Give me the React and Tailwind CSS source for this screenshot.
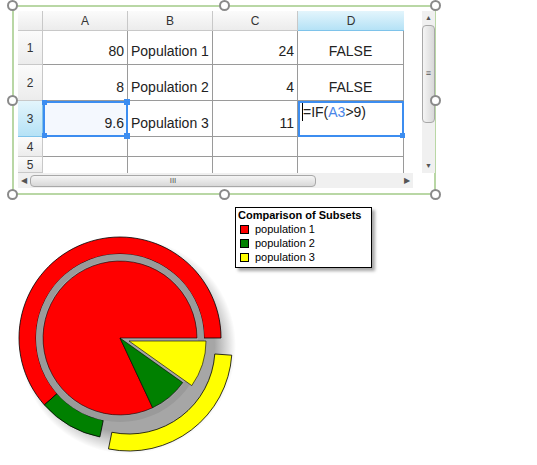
import React from 'react'

const cx = 120
const cy = 343

function pt(r, a, dx = 0, dy = 0) {
  const t = (a * Math.PI) / 180
  return [cx + dx + r * Math.cos(t), cy + dy + r * Math.sin(t)]
}

function wedge(r, a0, a1, dx = 0, dy = 0) {
  const [x0, y0] = pt(r, a0, dx, dy)
  const [x1, y1] = pt(r, a1, dx, dy)
  const big = a1 - a0 > 180 ? 1 : 0
  return `M${cx + dx},${cy + dy} L${x0},${y0} A${r},${r} 0 ${big} 1 ${x1},${y1} Z`
}

function band(r0, r1, a0, a1, dx = 0, dy = 0) {
  const [x0, y0] = pt(r1, a0, dx, dy)
  const [x1, y1] = pt(r1, a1, dx, dy)
  const [x2, y2] = pt(r0, a1, dx, dy)
  const [x3, y3] = pt(r0, a0, dx, dy)
  const big = a1 - a0 > 180 ? 1 : 0
  return `M${x0},${y0} A${r1},${r1} 0 ${big} 1 ${x1},${y1} L${x2},${y2} A${r0},${r0} 0 ${big} 0 ${x3},${y3} Z`
}

function Handle({ className }) {
  return <div className={`absolute w-[11px] h-[11px] rounded-full border-2 border-[#8a8a8a] bg-white ${className}`} />
}

const colHead = 'flex items-center justify-center border-r border-b border-[#c8c8c8] bg-gradient-to-b from-[#fbfbfb] to-[#ececec] text-[12px] text-[#333]'
const rowHead = 'flex items-center justify-center border-r border-b border-[#c8c8c8] bg-gradient-to-b from-[#fbfbfb] to-[#ececec] text-[12px] text-[#333]'
const cell = 'flex items-end px-[3px] pb-[2px] border-r border-b border-[#9a9a9a] text-[14px] text-[#222] whitespace-nowrap overflow-hidden'

function Sheet() {
  return (
    <div className="flex pl-1 pt-1 h-full" style={{ fontFamily: '"Liberation Sans", Arial, sans-serif' }}>
      <div className="flex flex-col">
        <div className="grid grid-cols-[25px_85px_85px_85px_106px] grid-rows-[20px_34px_36px_36px_20px_16px]">
          <div className={colHead} />
          <div className={colHead}>A</div>
          <div className={colHead}>B</div>
          <div className={colHead}>C</div>
          <div className="flex items-center justify-center border-b border-[#7ec3ea] bg-gradient-to-b from-[#e3f5fc] to-[#b5e2f6] text-[12px] text-[#333]">D</div>

          <div className={rowHead}>1</div>
          <div className={`${cell} justify-end`}>80</div>
          <div className={cell}>Population 1</div>
          <div className={`${cell} justify-end`}>24</div>
          <div className={`${cell} justify-center`}>FALSE</div>

          <div className={rowHead}>2</div>
          <div className={`${cell} justify-end`}>8</div>
          <div className={cell}>Population 2</div>
          <div className={`${cell} justify-end`}>4</div>
          <div className={`${cell} justify-center`}>FALSE</div>

          <div className="flex items-center justify-center border-r border-b border-[#7ec3ea] bg-gradient-to-b from-[#e3f5fc] to-[#b5e2f6] text-[12px] text-[#333]">3</div>
          <div className="relative flex items-end justify-end px-[2px] pb-[1px] border-2 border-[#3c8df0] bg-[#f4f8fe] text-[14px] text-[#222]">
            9.6
            <span className="absolute -left-[3px] -top-[3px] w-[5px] h-[5px] bg-[#3c8df0]" />
            <span className="absolute -right-[4px] -top-[4px] w-[6px] h-[6px] bg-[#3c8df0]" />
            <span className="absolute -right-[4px] -bottom-[4px] w-[6px] h-[6px] bg-[#3c8df0]" />
            <span className="absolute -left-[3px] -bottom-[3px] w-[5px] h-[5px] bg-[#3c8df0]" />
          </div>
          <div className={cell}>Population 3</div>
          <div className={`${cell} justify-end`}>11</div>
          <div className="relative flex items-start px-[2px] border-2 border-[#3c8df0] text-[14px] text-[#222]">
            <span className="border-l border-black leading-[18px]">=IF(<span className="text-[#4a86e8]">A3</span>&gt;9)</span>
            <span className="absolute -right-[3px] -bottom-[3px] w-[5px] h-[5px] bg-[#3c8df0]" />
          </div>

          <div className={rowHead}>4</div>
          <div className={cell} />
          <div className={cell} />
          <div className={cell} />
          <div className={cell} />

          <div className={rowHead}>5</div>
          <div className="border-r border-[#9a9a9a]" />
          <div className="border-r border-[#9a9a9a]" />
          <div className="border-r border-[#9a9a9a]" />
          <div className="border-r border-[#9a9a9a]" />
        </div>
        <div className="flex items-center h-[15px] w-[395px] bg-[#f0f0f0] text-[#555]">
          <span className="w-[12px] text-[8px] text-center">◀</span>
          <div className="flex items-center justify-center w-[286px] h-[12px] rounded-sm border border-[#a8a8a8] bg-gradient-to-b from-[#f5f5f5] to-[#d8d8d8] text-[8px] leading-none">III</div>
          <div className="flex-1" />
          <span className="w-[12px] text-[8px] text-center">▶</span>
        </div>
      </div>
      <div className="ml-[9px] flex flex-col items-center w-[15px] h-[162px] bg-[#f0f0f0] text-[#555]">
        <span className="text-[7px] leading-[14px]">▲</span>
        <div className="flex items-center justify-center w-[13px] h-[98px] rounded-sm border border-[#a8a8a8] bg-gradient-to-r from-[#f5f5f5] to-[#d8d8d8] text-[9px]">≡</div>
        <div className="flex-1" />
        <span className="text-[7px] leading-[14px]">▼</span>
      </div>
    </div>
  )
}

function Chart() {
  const y0 = 0, y1 = 35.4, g1 = 64.9
  return (
    <svg width="240" height="265" viewBox="0 200 240 265">
      <defs>
        <radialGradient id="sh">
          <stop offset="80%" stopColor="#000" stopOpacity="0.35" />
          <stop offset="100%" stopColor="#000" stopOpacity="0" />
        </radialGradient>
      </defs>
      <circle cx={cx + 8} cy={cy + 8} r="108" fill="url(#sh)" />
      <path d={band(84, 101, 138.5, 360)} fill="#ff0000" stroke="#000" strokeWidth="0.8" />
      <path d={band(84, 101, 101.5, 138.5)} fill="#008000" stroke="#000" strokeWidth="0.8" />
      <path d={band(86, 103, 4, 101.5, 9, 10)} fill="#ffff00" stroke="#000" strokeWidth="0.8" />
      <circle cx={cx} cy={cy} r="81" fill="none" stroke="#9a9a9a" strokeWidth="6" />
      <path d={wedge(77, g1, 360)} fill="#ff0000" stroke="#000" strokeWidth="0.6" />
      <path d={wedge(77, y1, g1)} fill="#008000" stroke="#000" strokeWidth="0.6" />
      <path d={wedge(77, y0, y1, 9, 3)} fill="#ffff00" stroke="#000" strokeWidth="0.6" />
    </svg>
  )
}

export default function App() {
  return (
    <div className="w-[537px] h-[465px] bg-white overflow-hidden" style={{ fontFamily: '"Liberation Sans", Arial, sans-serif' }}>
      <div className="pt-[5px] pl-[12px]">
        <div className="relative w-[424px] h-[190px] border-2 border-[#b9d7a5]">
          <Sheet />
          <Handle className="-left-[7px] -top-[7px]" />
          <Handle className="left-[205px] -top-[7px]" />
          <Handle className="-right-[7px] -top-[7px]" />
          <Handle className="-left-[7px] top-[88px]" />
          <Handle className="-right-[7px] top-[88px]" />
          <Handle className="-left-[7px] -bottom-[7px]" />
          <Handle className="left-[205px] -bottom-[7px]" />
          <Handle className="-right-[7px] -bottom-[7px]" />
        </div>
      </div>
      <div className="flex">
        <Chart />
        <div className="mt-[12px] -ml-[5px] self-start w-[137px] border border-black bg-white px-[2px] pb-[3px] shadow-[3px_3px_3px_rgba(0,0,0,0.35)] text-[11px] leading-[14px] text-black">
          <div className="font-bold">Comparison of Subsets</div>
          {[['#ff0000', 'population 1'], ['#008000', 'population 2'], ['#ffff00', 'population 3']].map(([c, t]) => (
            <div key={t} className="flex items-center gap-[6px] pl-[2px]">
              <span className="w-[9px] h-[9px] border border-black" style={{ background: c }} />
              {t}
            </div>
          ))}
        </div>
      </div>
    </div>
  )
}
